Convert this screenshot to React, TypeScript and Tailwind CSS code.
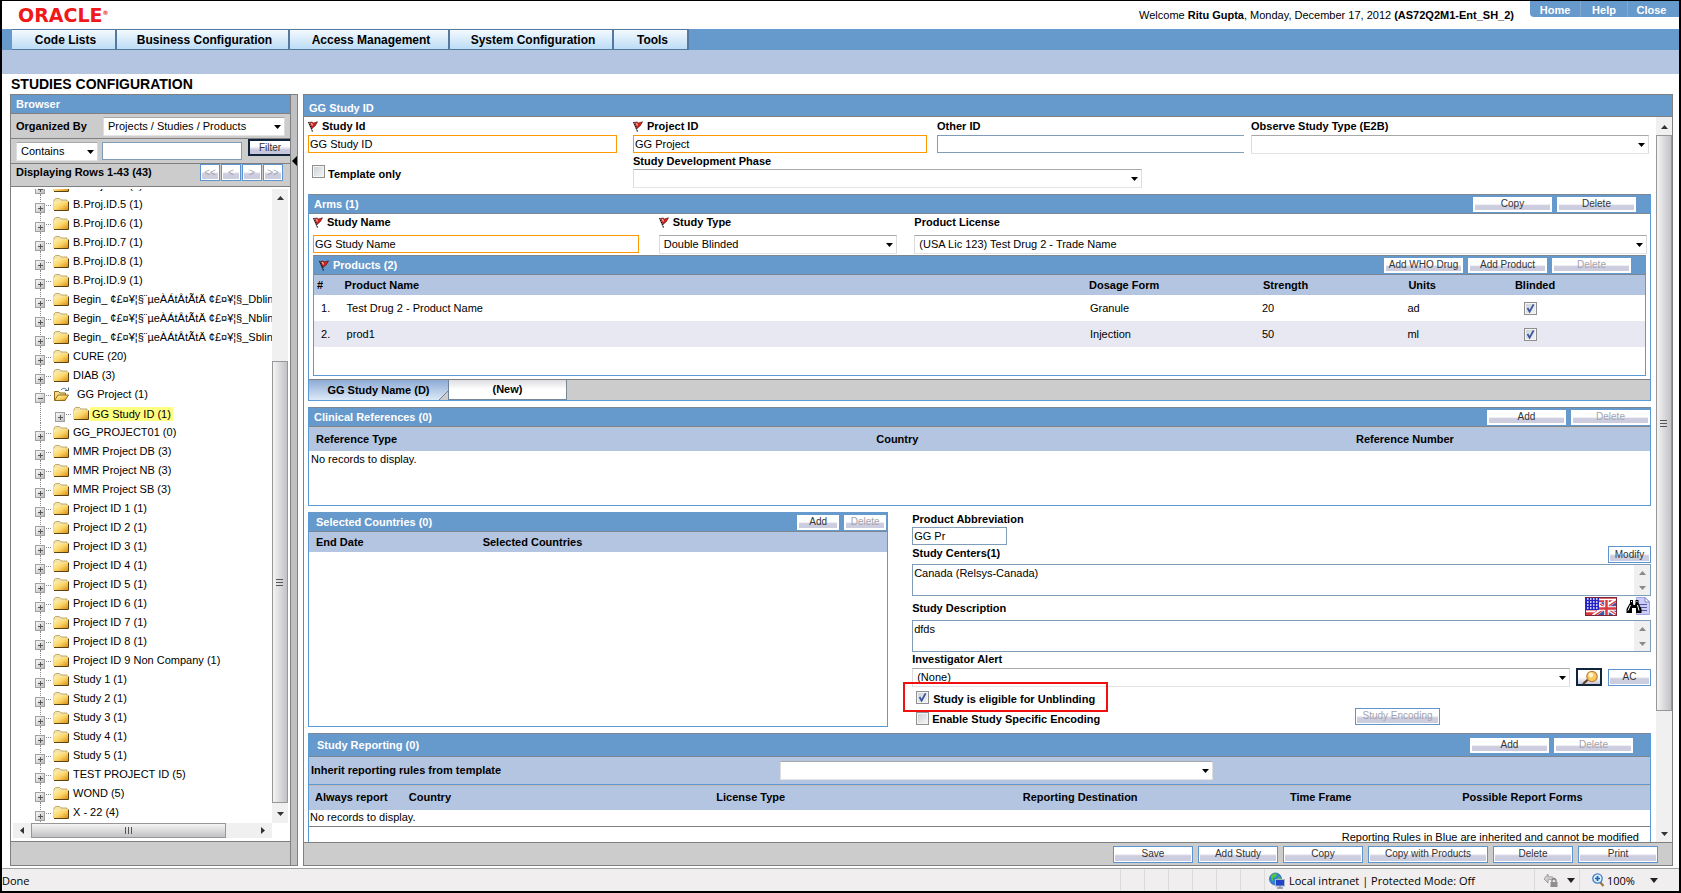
import type { ReactNode } from "react";

const menuItems = [
    { name: "Code Lists", width: "w-[105px]" },
    { name: "Business Configuration", width: "w-[173px]" },
    { name: "Access Management", width: "w-[160px]" },
    { name: "System Configuration", width: "w-[164px]" },
    { name: "Tools", width: "w-[75px]" },
];

const treeItems = [
    "B.Proj.ID.4 (1)",
    "B.Proj.ID.5 (1)",
    "B.Proj.ID.6 (1)",
    "B.Proj.ID.7 (1)",
    "B.Proj.ID.8 (1)",
    "B.Proj.ID.9 (1)",
    "Begin_ ¢£¤¥¦§¨µeÀÁtÂtÃtÄ ¢£¤¥¦§_Dblin",
    "Begin_ ¢£¤¥¦§¨µeÀÁtÂtÃtÄ ¢£¤¥¦§_Nblin",
    "Begin_ ¢£¤¥¦§¨µeÀÁtÂtÃtÄ ¢£¤¥¦§_Sblin",
    "CURE (20)",
    "DIAB (3)",
    "GG Project (1)",
    "GG Study ID (1)",
    "GG_PROJECT01 (0)",
    "MMR Project DB (3)",
    "MMR Project NB (3)",
    "MMR Project SB (3)",
    "Project ID 1 (1)",
    "Project ID 2 (1)",
    "Project ID 3 (1)",
    "Project ID 4 (1)",
    "Project ID 5 (1)",
    "Project ID 6 (1)",
    "Project ID 7 (1)",
    "Project ID 8 (1)",
    "Project ID 9 Non Company (1)",
    "Study 1 (1)",
    "Study 2 (1)",
    "Study 3 (1)",
    "Study 4 (1)",
    "Study 5 (1)",
    "TEST PROJECT ID (5)",
    "WOND (5)",
    "X - 22 (4)",
];

const products = [
    { name: "Test Drug 2 - Product Name", form: "Granule", strength: "20", units: "ad" },
    { name: "prod1", form: "Injection", strength: "50", units: "ml" },
];

const Button = ({ children, className = "", disabled = false, outlined = false }: { children: ReactNode; className?: string; disabled?: boolean; outlined?: boolean }) => (
    <button
        type="button"
        disabled={disabled}
        className={`flex shrink-0 items-center justify-center border p-px text-[10px] leading-none ${outlined ? "h-[17px] border-[#5b94cf]" : "h-[15px] border-white"} ${disabled ? "text-[#a3a3ad]" : "text-[#333]"} bg-white ${className}`}
    >
        <span className="flex h-full w-full items-center justify-center bg-linear-to-b from-white from-45% to-[#cdcde0] to-60% whitespace-nowrap">{children}</span>
    </button>
);

const Flag = () => (
    <svg width="10" height="11" viewBox="0 0 10 11" className="mr-1 shrink-0" aria-hidden="true">
        <path d="M0.5 1L4.5 10.5" stroke="#111" strokeWidth="1.2" strokeDasharray="1.6 0.6" />
        <path d="M1.5 1.5L4 1L5.5 2L9.5 0.8L8 3.5L7.5 4.5L4 7.5Z" fill="#d8201c" stroke="#4a0806" strokeWidth="0.6" />
        <path d="M2.5 2L4 2L5 4L4 5Z" fill="#f8a9a0" />
    </svg>
);

const Label = ({ htmlFor, children, flag = false, className = "" }: { htmlFor: string; children: ReactNode; flag?: boolean; className?: string }) => (
    <label htmlFor={htmlFor} className={`flex items-center font-bold whitespace-nowrap ${className}`}>
        {flag && <Flag />}
        {children}
    </label>
);

const TextBox = ({ id, value = "", required = false, className = "" }: { id: string; value?: string; required?: boolean; className?: string }) => (
    <input
        id={id}
        type="text"
        defaultValue={value}
        className={`block h-[18px] w-full rounded-none border bg-white px-px ${required ? "border-[#ff9900]" : "border-[#7f9db9]"} ${className}`}
    />
);

const Select = ({ id, value = "", label, className = "" }: { id: string; value?: string; label?: string; className?: string }) => (
    <div className={`relative ${className}`}>
        <select id={id} aria-label={label} className="block h-[19px] w-full appearance-none rounded-none border border-t-[#a8a8a8] border-r-[#dcdcdc] border-b-[#e4e4e4] border-l-[#dcdcdc] bg-white pl-1 text-black">
            <option>{value}</option>
        </select>
        <svg width="7" height="4" viewBox="0 0 7 4" className="pointer-events-none absolute top-2 right-1" aria-hidden="true">
            <path d="M0 0H7L3.5 4Z" fill="#000" />
        </svg>
    </div>
);

const CheckBox = ({ id, checked = false, label }: { id: string; checked?: boolean; label?: string }) => (
    <span className="relative inline-block size-[13px] shrink-0 align-middle">
        <input
            id={id}
            type="checkbox"
            defaultChecked={checked}
            aria-label={label}
            className="peer block size-[13px] appearance-none border border-[#8e8f8f] bg-linear-to-br from-[#cbcfd5] to-[#f6f6f6] shadow-[inset_0_0_0_1px_#f4f4f4]"
        />
        <svg viewBox="0 0 13 13" className="pointer-events-none absolute inset-0 hidden peer-checked:block" aria-hidden="true">
            <path d="M3.5 6L5.6 9.6L9.6 2.4" fill="none" stroke="#3a559f" strokeWidth="1.8" />
        </svg>
    </span>
);

const Bar = ({ title, children, className = "" }: { title: ReactNode; children?: ReactNode; className?: string }) => (
    <div className={`flex h-5 items-center border-y border-[#7d8793] bg-[#6699cc] ${className}`}>
        <h2 className="flex flex-1 items-center font-bold text-white">{title}</h2>
        <div className="flex gap-[5px]">{children}</div>
    </div>
);

const Arrow = ({ dir, dim = false }: { dir: "up" | "down" | "left" | "right"; dim?: boolean }) => {
    const paths = {
        up: "M0 6H7L3.5 2Z",
        down: "M0 2H7L3.5 6Z",
        left: "M5 0V7L1 3.5Z",
        right: "M2 0V7L6 3.5Z",
    };
    return (
        <svg width="7" height="7" viewBox="0 0 7 7" aria-hidden="true">
            <path d={paths[dir]} fill={dim ? "#8a8a8a" : "#333"} />
        </svg>
    );
};

const Grip = ({ className = "" }: { className?: string }) => (
    <svg width="8" height="8" viewBox="0 0 8 8" className={className} aria-hidden="true">
        <path d="M0 1.5H7M0 4.5H7M0 7.5H7" stroke="#555" strokeWidth="1" />
    </svg>
);

const Folder = ({ open = false }: { open?: boolean }) => (
    <svg width="16" height="15" viewBox="0 0 16 15" className="shrink-0" aria-hidden="true">
        <defs>
            <linearGradient id="folder" x1="0" y1="0" x2="1" y2="1">
                <stop offset="0" stopColor="#fff2b4" />
                <stop offset="0.5" stopColor="#fbd566" />
                <stop offset="1" stopColor="#d58a12" />
            </linearGradient>
        </defs>
        {open ? (
            <>
                <path d="M1.5 13V4.5H5.5L7 6H12.5V13Z" fill="#f7dc85" stroke="#8f6a1c" />
                <path d="M1.5 13.5L5 8H15.5L12 13.5Z" fill="url(#folder)" stroke="#8f6a1c" />
                <path d="M8 3C10 0.5 13 1 13.8 3.5" fill="none" stroke="#49688f" />
                <path d="M12 3.5H15.5V0.5" fill="none" stroke="#49688f" />
            </>
        ) : (
            <>
                <path d="M1 13V3L2.5 1.5H6.5L8 3H14V13Z" fill="#f3e3a8" stroke="#b5984e" strokeWidth="0.8" />
                <path d="M1 4.5H15V13.5H1Z" fill="url(#folder)" />
                <path d="M1 13.5H15.5V4.5" fill="none" stroke="#5c4212" />
            </>
        )}
    </svg>
);

const Expander = ({ minus = false, line = true }: { minus?: boolean; line?: boolean }) => (
    <svg width="19" height="19" viewBox="0 0 19 19" className="shrink-0" aria-hidden="true">
        <defs>
            <linearGradient id="expander" x1="0" y1="0" x2="1" y2="1">
                <stop offset="0" stopColor="#fff" />
                <stop offset="1" stopColor="#b9b9b9" />
            </linearGradient>
        </defs>
        {line && <path d="M6.5 0V19" stroke="#888" strokeDasharray="1 1" />}
        <path d="M12 10.5H18" stroke="#888" strokeDasharray="1 1" />
        <rect x="1.5" y="8.5" width="9" height="9" fill="url(#expander)" stroke="#a0a0a0" />
        <path d={minus ? "M4 13.5H9" : "M4 13.5H9M6.5 11V16"} stroke="#555" />
    </svg>
);

const TreeRow = ({ name }: { name: string }) => {
    const open = name === "GG Project (1)";
    const selected = name === "GG Study ID (1)";
    return (
        <li className="flex h-[19px] items-center pl-[21px] whitespace-nowrap">
            {selected && (
                <svg width="20" height="19" className="shrink-0" aria-hidden="true">
                    <path d="M6.5 0V19" stroke="#888" strokeDasharray="1 1" />
                </svg>
            )}
            <Expander minus={open} line={!selected} />
            <Folder open={open} />
            <a href="#" className={selected ? "ml-px bg-[#ffff80] px-[2px] leading-[14px]" : open ? "ml-2" : "ml-1"}>
                {name}
            </a>
        </li>
    );
};

const Browser = () => (
    <section className="flex w-[281px] shrink-0 flex-col border border-[#808080] bg-[#cccccc]">
        <h2 className="h-[19px] border-b border-[#808080] bg-[#6699cc] pl-[5px] leading-[18px] font-bold text-white">Browser</h2>
        <div className="flex h-[25px] items-center border-b border-[#808080] pr-[5px] pl-[5px]">
            <label htmlFor="organized" className="w-[87px] font-bold">
                Organized By
            </label>
            <Select id="organized" value="Projects / Studies / Products" className="flex-1" />
        </div>
        <div className="flex h-[25px] items-center border-b border-[#808080] pl-[5px]">
            <Select id="operator" label="Filter operator" value="Contains" className="mr-1 w-[82px]" />
            <input aria-label="Filter text" className="h-[18px] w-[140px] border border-[#7f9db9] bg-white" />
            <button type="button" className="mb-2 ml-auto h-[17px] w-[42px] border-2 border-r-0 border-[#10243c] bg-linear-to-b from-white from-40% to-[#c6c6dc] to-70% text-[10px] leading-[13px] text-[#333]">
                Filter
            </button>
        </div>
        <div className="flex h-[23px] shrink-0 items-center border-b border-[#808080] pr-[7px] pb-[5px] pl-[5px]">
            <span className="flex-1 font-bold">Displaying Rows 1-43 (43)</span>
            <div className="flex gap-px">
                {["<<", "<", ">", ">>"].map((text) => (
                    <Button key={text} outlined disabled className="w-5">
                        {text}
                    </Button>
                ))}
            </div>
        </div>
        <div className="flex min-h-0 flex-1 flex-col bg-white px-[2px] pt-[2px] pb-[3px]">
            <div className="flex min-h-0 flex-1">
                <ul className="-mt-[13px] min-w-0 flex-1 overflow-hidden [clip-path:inset(13px_0_0_0)]">
                    {treeItems.map((name) => (
                        <TreeRow key={name} name={name} />
                    ))}
                </ul>
                <div className="flex w-4 flex-col bg-[#f0f0f0]">
                    <div className="flex h-4 items-center justify-center">
                        <Arrow dir="up" />
                    </div>
                    <div className="flex-[157]" />
                    <div className="flex flex-[441] items-center justify-center border border-[#979797] bg-linear-to-r from-[#f4f4f4] to-[#c2c2c6]">
                        <Grip />
                    </div>
                    <div className="flex h-5 items-center justify-center">
                        <Arrow dir="down" />
                    </div>
                </div>
            </div>
            <div className="mr-4 flex h-[15px] shrink-0 bg-[#f0f0f0]">
                <div className="flex w-[18px] items-center justify-center">
                    <Arrow dir="left" />
                </div>
                <div className="flex flex-1 items-center justify-center border border-[#979797] bg-linear-to-b from-[#f4f4f4] to-[#c2c2c6]">
                    <Grip className="rotate-90" />
                </div>
                <div className="flex w-[46px] items-center justify-end pr-[6px]">
                    <Arrow dir="right" />
                </div>
            </div>
        </div>
        <div className="h-6 shrink-0 border-t border-[#808080]" />
    </section>
);

const StudyFields = () => (
    <div className="grid grid-cols-[325fr_304fr_314fr_400fr]">
        <div className="pr-4">
            <Label htmlFor="study-id" flag className="h-[18px]">
                Study Id
            </Label>
            <TextBox id="study-id" value="GG Study ID" required />
            <div className="flex pt-3 pl-1">
                <CheckBox id="template" />
                <Label htmlFor="template" className="pt-[3px] pl-[3px]">
                    Template only
                </Label>
            </div>
        </div>
        <div className="pr-[10px]">
            <Label htmlFor="project-id" flag className="h-[18px]">
                Project ID
            </Label>
            <TextBox id="project-id" value="GG Project" required />
        </div>
        <div className="pr-[7px]">
            <Label htmlFor="other-id" className="h-[18px]">
                Other ID
            </Label>
            <TextBox id="other-id" className="border-r-0" />
        </div>
        <div className="pr-[2px]">
            <Label htmlFor="observe" className="h-[18px]">
                Observe Study Type (E2B)
            </Label>
            <Select id="observe" />
        </div>
        <div className="col-span-2 col-start-2 -mt-7 pr-[109px]">
            <Label htmlFor="phase" className="h-4">
                Study Development Phase
            </Label>
            <Select id="phase" />
        </div>
    </div>
);

const Arms = () => (
    <section className="mt-[6px] border-x border-b border-[#5b9bd5]">
        <Bar className="pr-[14px] pl-[5px]" title="Arms (1)">
            <Button className="w-[79px]">Copy</Button>
            <Button className="w-[79px]">Delete</Button>
        </Bar>
        <div className="grid grid-cols-[345fr_255fr_734fr] pl-1">
            <div className="pr-5">
                <Label htmlFor="study-name" flag className="mb-1 h-[17px]">
                    Study Name
                </Label>
                <TextBox id="study-name" value="GG Study Name" required />
            </div>
            <div className="pr-[17px]">
                <Label htmlFor="study-type" flag className="mb-1 h-[17px]">
                    Study Type
                </Label>
                <Select id="study-type" value="Double Blinded" />
            </div>
            <div className="pr-[3px]">
                <Label htmlFor="license" className="mb-1 h-[17px]">
                    Product License
                </Label>
                <Select id="license" value="(USA Lic 123) Test Drug 2 - Trade Name" />
            </div>
        </div>
        <div className="mx-1 mt-px mb-[3px] border-x border-b border-[#5b9bd5] pb-7">
            <Bar
                className="pr-[14px] pl-[5px]"
                title={
                    <>
                        <Flag />
                        Products (2)
                    </>
                }
            >
                <Button className="w-[79px]">Add WHO Drug</Button>
                <Button className="w-[79px]">Add Product</Button>
                <Button className="w-[79px]" disabled>
                    Delete
                </Button>
            </Bar>
            <table className="w-full table-fixed text-left">
                <colgroup>
                    <col className="w-[2%]" />
                    <col className="w-[56%]" />
                    <col className="w-[13%]" />
                    <col className="w-[11%]" />
                    <col className="w-[8%]" />
                    <col className="w-[10%]" />
                </colgroup>
                <thead>
                    <tr className="h-5 bg-[#b3c5e1]">
                        <th className="pl-[3px]">#</th>
                        <th className="pl-1">Product Name</th>
                        <th className="pl-[3px]">Dosage Form</th>
                        <th className="pl-1">Strength</th>
                        <th className="pl-[3px]">Units</th>
                        <th className="pl-[3px]">Blinded</th>
                    </tr>
                </thead>
                <tbody>
                    {products.map((product, i) => (
                        <tr key={product.name} className="h-[26px] even:bg-[#e8e8f2]">
                            <td className="pl-[7px]">{i + 1}.</td>
                            <td className="pl-[6px]">{product.name}</td>
                            <td className="pl-1">{product.form}</td>
                            <td className="pl-[3px]">{product.strength}</td>
                            <td className="pl-[2px]">{product.units}</td>
                            <td className="pl-3">
                                <CheckBox id={`blinded-${i}`} checked label={`${product.name} blinded`} />
                            </td>
                        </tr>
                    ))}
                </tbody>
            </table>
        </div>
        <div className="flex h-[21px] border-t border-[#808080] bg-[#cccccc] font-bold">
            <button type="button" className="relative w-[140px] border-r border-[#6f8199] bg-linear-to-b from-[#8eabd4] to-[#dce9f8]">
                GG Study Name (D)
                <svg width="9" height="9" viewBox="0 0 9 9" className="absolute right-0 bottom-0" aria-hidden="true">
                    <path d="M9 0V9H0Z" fill="#ccc" />
                    <path d="M9 0L0 9" stroke="#6f8199" />
                </svg>
            </button>
            <button type="button" className="w-[118px] border-r border-b border-[#7a8797] bg-linear-to-b from-[#dedde2] to-white to-50%">
                (New)
            </button>
        </div>
    </section>
);

const ClinicalReferences = () => (
    <section className="mt-[6px] h-[99px] border border-t-0 border-[#5b9bd5]">
        <Bar className="pl-[5px]" title="Clinical References (0)">
            <Button className="w-[79px]">Add</Button>
            <Button className="w-[79px]" disabled>
                Delete
            </Button>
        </Bar>
        <table className="w-full table-fixed text-left">
            <thead>
                <tr className="h-[23px] border-t border-[#c3c3c3] bg-[#b3c5e1]">
                    <th className="w-[42%] pl-[7px]">Reference Type</th>
                    <th className="w-[36%] pl-1">Country</th>
                    <th className="w-[22%] pl-px">Reference Number</th>
                </tr>
            </thead>
            <tbody>
                <tr className="h-[18px]">
                    <td colSpan={3} className="pl-[2px]">
                        No records to display.
                    </td>
                </tr>
            </tbody>
        </table>
    </section>
);

const TextArea = ({ id, value }: { id: string; value: string }) => (
    <div className="flex h-8 border border-[#7f9db9]">
        <textarea id={id} defaultValue={value} className="flex-1 resize-none overflow-hidden px-px leading-4" />
        <div className="flex w-4 flex-col items-center justify-around bg-[#f0f0f0]">
            <Arrow dir="up" dim />
            <Arrow dir="down" dim />
        </div>
    </div>
);

const FlagsIcon = () => (
    <svg width="32" height="19" viewBox="0 0 32 19" aria-hidden="true">
        <rect width="32" height="19" fill="#d63a40" />
        <path d="M14 2.5H32M14 6H32" stroke="#fff" strokeWidth="1.5" />
        <path d="M17 5L32 10V19H9Z" fill="#3a5bab" />
        <path d="M24 8L32 3V9Z" fill="#3a5bab" />
        <path d="M8 19L31 3M14 7L32 18" stroke="#fff" strokeWidth="3.5" />
        <path d="M9 19L31 4M15 7L32 18" stroke="#d63a40" strokeWidth="1.4" />
        <path d="M21.5 3V19M12 11.5H32" stroke="#fff" strokeWidth="4.5" />
        <path d="M21.5 3V19M12 11.5H32" stroke="#d63a40" strokeWidth="2.5" />
        <rect width="14" height="13" fill="#2222c8" />
        <path d="M2 2H14M2 5H14M2 8H14M2 11H14" stroke="#fff" strokeWidth="1.5" strokeDasharray="1.5 1.5" />
        <path d="M0 13.5H12L9 15.5H0Z" fill="#fff" />
        <path d="M0 15.5H9L5 19H0Z" fill="#d63a40" />
        <rect x="0.5" y="0.5" width="31" height="18" fill="none" stroke="#7a2436" />
    </svg>
);

const LookupIcon = () => (
    <svg width="25" height="19" viewBox="0 0 25 19" aria-hidden="true">
        <path d="M10.5 0.5H19L23.5 5V17.5H10.5Z" fill="#ccccfa" stroke="#a5a5dd" />
        <path d="M19 0.5V5H23.5Z" fill="#fff" stroke="#8585c9" />
        <path d="M13 7.5H21M13 10.5H21M13 13.5H21" stroke="#55559e" />
        <path d="M4 3H7V6L7.5 8H9L9.5 6V3H12.5V6L15.5 12V16H10V11H6V16H0.5V12L4 6Z" fill="#000" />
        <path d="M5.5 4V5M11 4V5M4.5 8L2 13.5M11.5 8L13 13.5" stroke="#fff" />
    </svg>
);

const MagnifierIcon = () => (
    <svg width="20" height="15" viewBox="0 0 20 15" aria-hidden="true">
        <path d="M9 9.5L4 14" stroke="#5a3d22" strokeWidth="2.2" />
        <circle cx="13" cy="6.5" r="5.2" fill="#fdc95c" stroke="#b98440" strokeWidth="1.2" />
        <circle cx="11.8" cy="5" r="2.4" fill="#fff4cf" />
    </svg>
);

const StudyDetails = () => (
    <div className="mt-[6px] flex h-[215px]">
        <section className="w-[43.2%] border border-t-0 border-[#5b9bd5]">
            <Bar className="border-t-[#6699cc] pr-px pl-[7px]" title="Selected Countries (0)">
                <Button className="w-[42px]">Add</Button>
                <Button className="w-[42px]" disabled>
                    Delete
                </Button>
            </Bar>
            <table className="w-full table-fixed text-left">
                <thead>
                    <tr className="h-5 bg-[#b3c5e1]">
                        <th className="w-[29%] pl-[7px]">End Date</th>
                        <th className="pl-[6px]">Selected Countries</th>
                    </tr>
                </thead>
            </table>
        </section>
        <div className="ml-6 min-w-0 flex-1">
            <Label htmlFor="abbreviation" className="h-[15px]">
                Product Abbreviation
            </Label>
            <div className="w-[95px]">
                <TextBox id="abbreviation" value="GG Pr" />
            </div>
            <div className="flex h-[19px] items-center justify-between">
                <Label htmlFor="centers" className="pb-[3px]">
                    Study Centers(1)
                </Label>
                <Button outlined className="w-[43px]">
                    Modify
                </Button>
            </div>
            <TextArea id="centers" value="Canada (Relsys-Canada)" />
            <div className="flex h-6 items-center">
                <Label htmlFor="description" className="flex-1">
                    Study Description
                </Label>
                <button type="button" aria-label="Translations" className="mr-[9px] mb-1">
                    <FlagsIcon />
                </button>
                <button type="button" aria-label="Look up description" className="mb-1">
                    <LookupIcon />
                </button>
            </div>
            <TextArea id="description" value="dfds" />
            <Label htmlFor="alert" className="h-[15px]">
                Investigator Alert
            </Label>
            <div className="flex h-5 items-center">
                <Select id="alert" value="(None)" className="flex-1" />
                <button type="button" aria-label="Search" className="ml-[6px] flex h-[18px] w-[26px] items-center justify-center border-2 border-[#10243c] bg-linear-to-b from-white from-50% to-[#c6c6dc]">
                    <MagnifierIcon />
                </button>
                <Button outlined className="ml-[6px] w-[43px]">
                    AC
                </Button>
            </div>
            <div className="relative flex h-[21px] items-center pl-1">
                <CheckBox id="unblinding" checked />
                <Label htmlFor="unblinding" className="pt-1 pl-1">
                    Study is eligible for Unblinding
                </Label>
                <div className="pointer-events-none absolute -top-[5px] -left-[9px] h-[30px] w-[205px] border-2 border-[#f01010]" />
            </div>
            <div className="flex h-5 items-center pl-1">
                <CheckBox id="encoding" />
                <Label htmlFor="encoding" className="flex-1 pt-[2px] pl-[3px]">
                    Enable Study Specific Encoding
                </Label>
                <Button outlined disabled className="mr-[211px] mb-1 w-[85px]">
                    Study Encoding
                </Button>
            </div>
        </div>
    </div>
);

const StudyReporting = () => (
    <section className="mt-[6px] min-h-0 flex-1 overflow-hidden border-x border-[#5b9bd5]">
        <Bar className="h-6 pr-[17px] pl-2" title="Study Reporting (0)">
            <Button className="w-[79px]">Add</Button>
            <Button className="w-[79px]" disabled>
                Delete
            </Button>
        </Bar>
        <div className="flex h-7 items-center border-b border-[#5b9bd5] bg-[#b3c5e1] pl-[2px]">
            <Label htmlFor="template-rules" className="w-[35%]">
                Inherit reporting rules from template
            </Label>
            <Select id="template-rules" className="w-[32.4%]" />
        </div>
        <table className="w-full table-fixed text-left">
            <thead>
                <tr className="h-6 border-t border-[#c3b8b4] bg-[#b3c5e1]">
                    <th className="w-[7%] pl-[6px]">Always report</th>
                    <th className="w-[23%] pl-[6px]">Country</th>
                    <th className="w-[23%] pl-[5px]">License Type</th>
                    <th className="w-[20%] pl-[3px]">Reporting Destination</th>
                    <th className="w-[13%] pl-[2px]">Time Frame</th>
                    <th className="w-[14%] pl-0">Possible Report Forms</th>
                </tr>
            </thead>
            <tbody>
                <tr className="h-[17px] border-b border-[#808080]">
                    <td colSpan={6} className="pl-px">
                        No records to display.
                    </td>
                </tr>
            </tbody>
        </table>
        <p className="pt-1 pr-[11px] text-right">Reporting Rules in Blue are inherited and cannot be modified</p>
    </section>
);

const StatusBar = () => (
    <footer className="mt-[2px] flex h-[25px] shrink-0 items-center border-t border-b-2 border-t-[#a0a0a0] border-b-black bg-[#f0eeee] font-['Open_Sans','Noto_Sans',sans-serif] text-[11px]">
        <span className="flex-1">Done</span>
        <div className="flex h-full">
            {[0, 1, 2, 3, 4, 5].map((i) => (
                <span key={i} className="w-6 border-l border-[#dcdada]" />
            ))}
        </div>
        <div className="flex h-full w-[270px] items-center gap-1 border-l border-[#dcdada] pl-1">
            <svg width="16" height="17" viewBox="0 0 16 17" aria-hidden="true">
                <circle cx="6.5" cy="7" r="6" fill="#2f86d8" stroke="#1b5ca3" strokeWidth="0.7" />
                <path d="M2 4C3 2 6 0.8 8 2L7 5L4 6L4.5 9L2.5 8ZM9 5L12 6L11 9L8 8Z" fill="#58c33c" />
                <rect x="6.5" y="7.5" width="9" height="6.5" fill="#2345c4" stroke="#a9b4cf" />
                <path d="M8 16H14M11 14V16" stroke="#8791a8" strokeWidth="1.4" />
            </svg>
            <span className="whitespace-nowrap">Local intranet | Protected Mode: Off</span>
        </div>
        <div className="flex h-full w-[45px] items-center gap-2 border-l border-[#dcdada] pl-2">
            <svg width="16" height="16" viewBox="0 0 16 16" aria-hidden="true">
                <path d="M1 7L5 2V5C9 4 11 5 12 8C9 7 7 7 5 8V11Z" fill="#cfcfcf" stroke="#8f8f8f" strokeWidth="0.8" />
                <path d="M9 10V8.5A2 2 0 0 1 13 8.5V10" fill="none" stroke="#777" strokeWidth="1.2" />
                <rect x="7.5" y="10" width="7" height="5" fill="#8f8f8f" />
            </svg>
            <svg width="8" height="5" viewBox="0 0 8 5" aria-hidden="true">
                <path d="M0 0H8L4 5Z" fill="#222" />
            </svg>
        </div>
        <button type="button" className="flex h-full w-[100px] items-center gap-[2px] border-l border-[#dcdada] pl-3">
            <svg width="13" height="14" viewBox="0 0 13 14" aria-hidden="true">
                <path d="M8 9L11.5 13" stroke="#a0703c" strokeWidth="2" />
                <circle cx="5.5" cy="5.5" r="4.7" fill="#dceefd" stroke="#3d7fc4" strokeWidth="1.3" />
                <path d="M3 5.5H8M5.5 3V8" stroke="#1e62b4" strokeWidth="1.7" />
            </svg>
            100%
            <svg width="8" height="5" viewBox="0 0 8 5" className="mr-[21px] ml-auto" aria-hidden="true">
                <path d="M0 0H8L4 5Z" fill="#222" />
            </svg>
        </button>
    </footer>
);

const App = () => {
    return (
        <div className="flex h-screen flex-col overflow-hidden border-x-2 border-t border-black bg-white font-['Liberation_Sans',Arial,sans-serif] text-[11px] leading-[13px] text-black">
            <header className="shrink-0">
                <div className="flex h-7 justify-between">
                    <div className="flex items-center pt-px pl-4 font-['DejaVu_Sans',sans-serif] text-[19px] font-bold text-[#f01818]">
                        ORACLE<sup className="text-[6px]">®</sup>
                    </div>
                    <div className="flex">
                        <p className="pt-2 pr-4">
                            Welcome <b>Ritu Gupta</b>, Monday, December 17, 2012 <b>(AS72Q2M1-Ent_SH_2)</b>
                        </p>
                        <nav className="flex h-4 rounded-bl bg-[#6699cc] font-bold text-white">
                            <a href="#" className="w-[50px] pt-[3px] text-center">
                                Home
                            </a>
                            <a href="#" className="w-[47px] border-l border-[#86a9cd] pt-[3px] text-center">
                                Help
                            </a>
                            <a href="#" className="w-[52px] border-l border-[#86a9cd] pt-[3px] pr-1 text-center">
                                Close
                            </a>
                        </nav>
                    </div>
                </div>
                <nav className="flex h-[21px] bg-[#6699cc] pl-[10px]">
                    {menuItems.map((item) => (
                        <a
                            key={item.name}
                            href="#"
                            className={`border-y border-r-2 border-[#54789e] bg-linear-to-b from-[#f4fafe] to-[#bcdcf5] pl-1 text-center text-xs leading-5 font-bold ${item.width}`}
                        >
                            {item.name}
                        </a>
                    ))}
                </nav>
                <div className="h-6 bg-[#b3c5e1]" />
                <h1 className="h-5 pl-[9px] text-sm leading-5 font-bold">STUDIES CONFIGURATION</h1>
            </header>
            <main className="flex min-h-0 flex-1 pr-[6px] pl-2">
                <Browser />
                <button type="button" aria-label="Collapse browser" className="relative w-[7px] shrink-0 border-y border-r border-[#808080] bg-[#c0bfc1]">
                    <svg width="5" height="10" viewBox="0 0 5 10" className="absolute top-[61px] right-0" aria-hidden="true">
                        <path d="M5 0V10L0 5Z" fill="#000" />
                    </svg>
                </button>
                <section className="ml-[5px] flex min-w-0 flex-1 flex-col border border-[#808080]">
                    <h2 className="h-[22px] shrink-0 border-b border-[#808080] bg-[#6699cc] pl-[5px] leading-[26px] font-bold text-white">GG Study ID</h2>
                    <div className="flex min-h-0 flex-1">
                        <div className="flex min-w-0 flex-1 flex-col pr-[5px] pl-1">
                            <StudyFields />
                            <Arms />
                            <ClinicalReferences />
                            <StudyDetails />
                            <StudyReporting />
                        </div>
                        <div className="flex w-4 flex-col bg-[#f0f0f0]">
                            <div className="flex h-[18px] items-center justify-center">
                                <Arrow dir="up" />
                            </div>
                            <div className="flex flex-[577] items-center justify-center border border-[#979797] bg-linear-to-r from-[#f4f4f4] to-[#c2c2c6]">
                                <Grip />
                            </div>
                            <div className="flex-[114]" />
                            <div className="flex h-[18px] items-center justify-center">
                                <Arrow dir="down" />
                            </div>
                        </div>
                    </div>
                    <div className="flex h-[23px] shrink-0 items-center justify-end gap-[5px] border-t border-[#808080] bg-[#cccccc] pr-[14px]">
                        <Button outlined className="w-20">Save</Button>
                        <Button outlined className="w-20">Add Study</Button>
                        <Button outlined className="w-20">Copy</Button>
                        <Button outlined className="w-[120px]">Copy with Products</Button>
                        <Button outlined className="w-20">Delete</Button>
                        <Button outlined className="w-20">Print</Button>
                    </div>
                </section>
            </main>
            <StatusBar />
        </div>
    );
};

export default App;
